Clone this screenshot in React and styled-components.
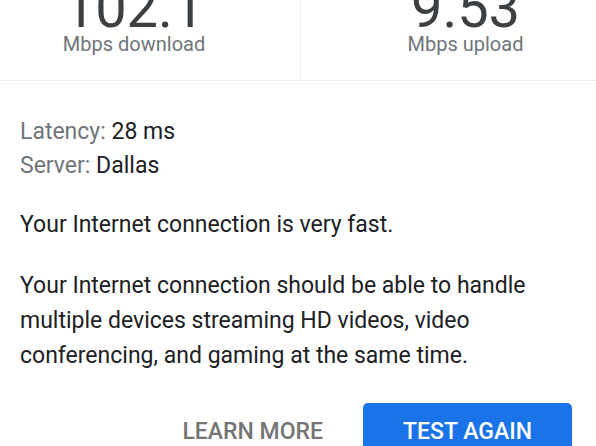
import styled, { createGlobalStyle } from 'styled-components';

const GlobalStyle = createGlobalStyle`
	*, *::before, *::after {
		box-sizing: border-box;
	}
	body {
		margin: 0;
		background: #ffffff;
		font-family: Roboto, "Liberation Sans", Arial, sans-serif;
		color: #202124;
		overflow: hidden;
	}
`;

const Card = styled.div`
	width: 596px;
	height: 446px;
	overflow: hidden;
	background: #fff;
`;

const StatsRow = styled.div`
	display: flex;
	margin-top: -16px;
	border-bottom: 1px solid #eeeeee;
`;

const Stat = styled.div`
	flex: ${(p) => p.$flex};
	display: flex;
	flex-direction: column;
	align-items: center;
	padding: 0 ${(p) => p.$padRight}px 24px ${(p) => p.$padLeft}px;
	border-left: ${(p) => (p.$divider ? '1px solid #eeeeee' : 'none')};
`;

const Number = styled.div`
	font-size: 56px;
	line-height: 48px;
	color: #3c4043;
`;

const Unit = styled.div`
	font-size: 20px;
	line-height: 24px;
	color: #70757a;
`;

const Body = styled.div`
	padding: 34px 24px 0 20px;
`;

const InfoLine = styled.div`
	font-size: 23px;
	line-height: 34px;
`;

const Label = styled.span`
	color: #70757a;
`;

const Paragraph = styled.p`
	margin: ${(p) => p.$top}px 0 0;
	font-size: 23px;
	line-height: ${(p) => p.$lh}px;
	color: #202124;
`;

const Actions = styled.div`
	display: flex;
	justify-content: flex-end;
	margin-top: 30px;
`;

const Button = styled.button`
	border: none;
	border-radius: 5px;
	padding: 17px 40px 13px;
	font-family: Roboto, "Liberation Sans", Arial, sans-serif;
	font-size: 23px;
	line-height: 24px;
	font-weight: 500;
	text-transform: uppercase;
	cursor: pointer;
	background: ${(p) => (p.$primary ? '#1a73e8' : 'transparent')};
	color: ${(p) => (p.$primary ? '#ffffff' : '#757575')};
`;

export default function App() {
	return (
		<>
			<GlobalStyle />
			<Card>
				<StatsRow>
					<Stat $flex='0 0 300px' $padLeft={0} $padRight={32}>
						<Number>102.1</Number>
						<Unit>Mbps download</Unit>
					</Stat>
					<Stat $flex='1' $padLeft={34} $padRight={0} $divider>
						<Number>9.53</Number>
						<Unit>Mbps upload</Unit>
					</Stat>
				</StatsRow>
				<Body>
					<InfoLine>
						<Label>Latency:</Label> 28 ms
					</InfoLine>
					<InfoLine>
						<Label>Server:</Label> Dallas
					</InfoLine>
					<Paragraph $top={25} $lh={34}>
						Your Internet connection is very fast.
					</Paragraph>
					<Paragraph $top={26} $lh={35}>
						Your Internet connection should be able to handle multiple devices streaming HD videos, video conferencing, and gaming at the same time.
					</Paragraph>
					<Actions>
						<Button>Learn more</Button>
						<Button $primary>Test again</Button>
					</Actions>
				</Body>
			</Card>
		</>
	);
}
